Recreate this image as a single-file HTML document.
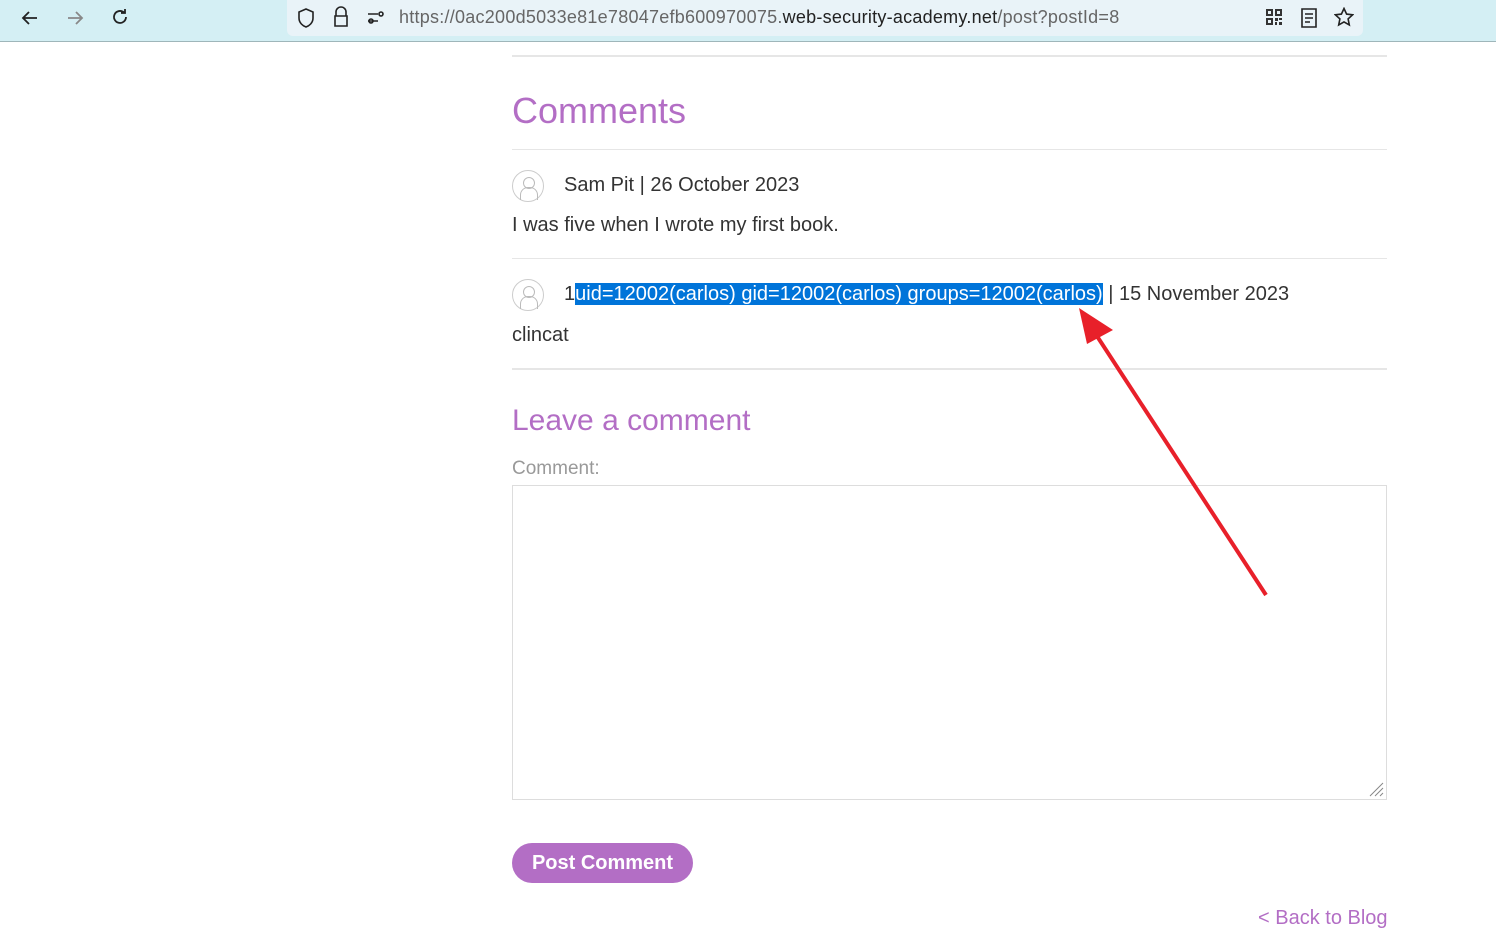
<!DOCTYPE html>
<html><head><meta charset="utf-8"><style>
*{margin:0;padding:0;box-sizing:border-box}
body{width:1496px;height:942px;overflow:hidden;background:#fff;font-family:"Liberation Sans",sans-serif;position:relative;color:#333}
.bar{position:absolute;left:0;top:0;width:1496px;height:42px;background:#d4eff4;border-bottom:1px solid #9fb6ba}
.url{position:absolute;left:287px;top:0;width:1076px;height:36px;background:#e9f3f8;border-radius:0 0 6px 6px}
.urltxt{position:absolute;left:399px;top:7px;font-size:18px;letter-spacing:0.25px;color:#666;white-space:nowrap}
.urltxt b{font-weight:normal;color:#222}
.hr{position:absolute;left:512px;width:875px;height:1px;background:#e6e6e6}
.t{position:absolute;white-space:nowrap}
.av{position:absolute;left:512px;width:32px;height:32px;border-radius:50%;border:1px solid #ccc}
.av:before{content:"";position:absolute;left:10px;top:6px;width:10px;height:10px;border:1px solid #bbb;border-radius:50%}
.av:after{content:"";position:absolute;left:7px;top:16px;width:16px;height:12px;border:1px solid #bbb;border-radius:8px 8px 0 0;border-bottom:none}
</style></head><body>
<div class="bar">
<svg style="position:absolute;left:20px;top:8px" width="20" height="20" viewBox="0 0 20 20" fill="none" stroke="#222" stroke-width="1.8"><path d="M17 10H3M9 4l-6 6 6 6"/></svg>
<svg style="position:absolute;left:65px;top:8px" width="20" height="20" viewBox="0 0 20 20" fill="none" stroke="#888" stroke-width="1.8"><path d="M3 10h14M11 4l6 6-6 6"/></svg>
<svg style="position:absolute;left:110px;top:7px" width="20" height="20" viewBox="0 0 20 20" fill="none" stroke="#222" stroke-width="1.8"><path d="M16 10a6 6 0 1 1-2-4.5M15 2v4h-4"/></svg>
<div class="url"></div>
<svg style="position:absolute;left:296px;top:7px" width="20" height="22" viewBox="0 0 20 22" fill="none" stroke="#222" stroke-width="1.6"><path d="M10 2l7 3v6c0 5-4 8-7 9-3-1-7-4-7-9V5z"/></svg>
<svg style="position:absolute;left:332px;top:6px" width="18" height="22" viewBox="0 0 18 22" fill="none" stroke="#222" stroke-width="1.6"><path d="M4 10V6a5 5 0 0 1 10 0v4M3 10h12v10H3z"/></svg>
<svg style="position:absolute;left:366px;top:10px" width="20" height="16" viewBox="0 0 20 16" fill="none" stroke="#222" stroke-width="1.6"><path d="M2 4h10M2 11h10"/><circle cx="15" cy="4" r="2"/><circle cx="5" cy="11" r="2"/></svg>
<div class="urltxt">https://0ac200d5033e81e78047efb600970075.<b>web-security-academy.net</b>/post?postId=8</div>
<svg style="position:absolute;left:1265px;top:8px" width="18" height="18" viewBox="0 0 18 18" fill="#333"><path d="M1 1h7v7H1zM3 3v3h3V3zM10 1h7v7h-7zM12 3v3h3V3zM1 10h7v7H1zM3 12v3h3v-3zM10 10h3v3h-3zM14 14h3v3h-3zM14 10h3v2h-3zM10 14h2v3h-2z"/></svg>
<svg style="position:absolute;left:1300px;top:8px" width="18" height="20" viewBox="0 0 18 20" fill="none" stroke="#222" stroke-width="1.6"><path d="M2 1h14v18H2zM5 6h8M5 10h8M5 14h5"/></svg>
<svg style="position:absolute;left:1334px;top:7px" width="20" height="20" viewBox="0 0 20 20" fill="none" stroke="#222" stroke-width="1.6"><path d="M10 1.5l2.6 5.6 6 .7-4.5 4.1 1.2 6-5.3-3-5.3 3 1.2-6L1.4 7.8l6-.7z"/></svg>
</div>
<div class="hr" style="top:55px;height:2px"></div>
<div class="t" style="left:512px;top:90px;font-size:36px;color:#b36ec5">Comments</div>
<div class="hr" style="top:149px"></div>
<div class="av" style="top:170px"></div>
<div class="t" style="left:564px;top:174px;font-size:20px">Sam Pit | 26 October 2023</div>
<div class="t" style="left:512px;top:214px;font-size:20px">I was five when I wrote my first book.</div>
<div class="hr" style="top:258px"></div>
<div class="av" style="top:279px"></div>
<div class="t" style="left:564px;top:283px;font-size:20px">1<span style="background:#0074d9;color:#fff">uid=12002(carlos) gid=12002(carlos) groups=12002(carlos)</span> | 15 November 2023</div>
<div class="t" style="left:512px;top:324px;font-size:20px">clincat</div>
<div class="hr" style="top:368px;height:2px"></div>
<div class="t" style="left:512px;top:404px;font-size:30px;color:#b36ec5">Leave a comment</div>
<div class="t" style="left:512px;top:458px;font-size:19px;color:#999">Comment:</div>
<div style="position:absolute;left:512px;top:485px;width:875px;height:315px;border:1px solid #ddd"></div>
<svg style="position:absolute;left:1368px;top:781px" width="16" height="16" stroke="#888"><path d="M2 15L15 2M7 15L15 7M12 15l3-3"/></svg>
<div style="position:absolute;left:512px;top:843px;width:181px;height:40px;border-radius:20px;background:#b36ec5;color:#fff;font-weight:bold;font-size:20px;text-align:center;line-height:40px">Post Comment</div>
<div class="t" style="left:1258px;top:907px;font-size:20px;color:#b36ec5">&lt; Back to Blog</div>
<svg style="position:absolute;left:0;top:0" width="1496" height="942"><path d="M1266 595L1093 330" stroke="#e8202a" stroke-width="4"/><path d="M1079 308l34 22-26 14z" fill="#e8202a"/></svg>
</body></html>
